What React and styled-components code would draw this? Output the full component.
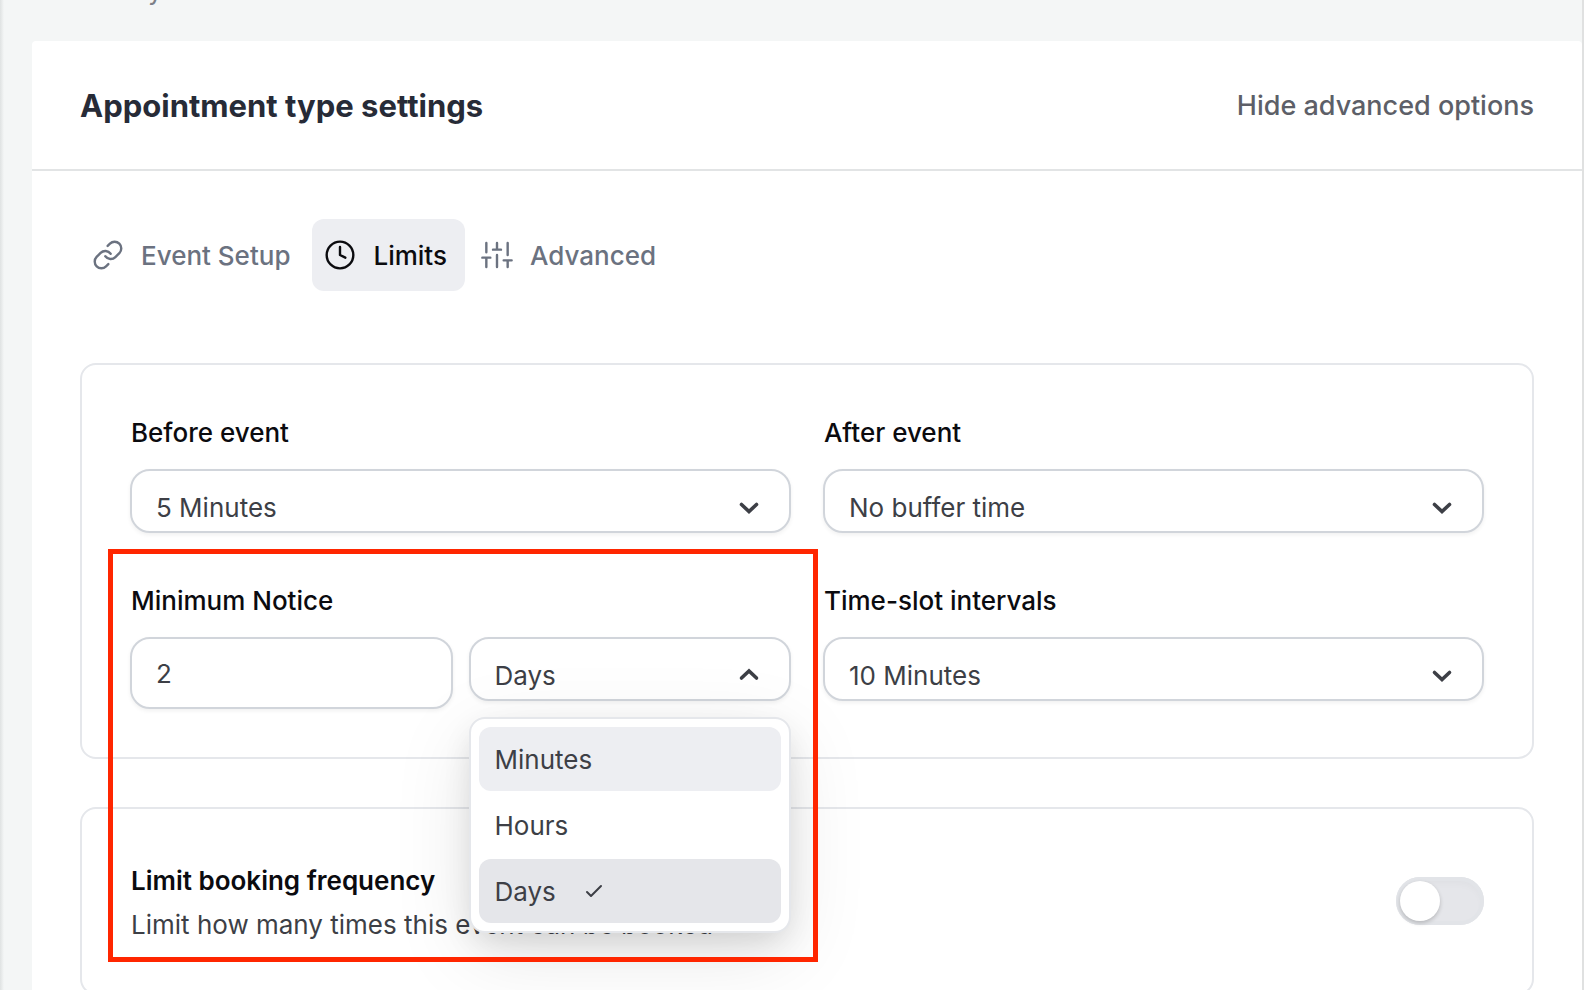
import { useState } from "react";
import styled, { createGlobalStyle, css } from "styled-components";

const GlobalStyle = createGlobalStyle`
  * {
    box-sizing: border-box;
  }

  body {
    margin: 0;
    overflow: hidden;
    background: #f4f6f6;
  }

  body, button, input, select {
    font-family: Inter, "Liberation Sans", sans-serif;
    font-size: 26px;
    color: #3d3f46;
  }
`;

const Page = styled.div`
  min-height: 100vh;
  padding-left: 32px;
  border-right: 2px solid #e0e1e1;
  background: linear-gradient(90deg, #dfe2e2, #f4f6f6 4px);
`;

const TopStrip = styled.div`
  height: 41px;
  padding-left: 116px;
  overflow: hidden;
`;

const Subtitle = styled.p`
  margin: -25px 0 0;
  font-size: 26px;
  line-height: 32px;
  color: #7d8087;
`;

const Panel = styled.main`
  background: #fff;
  border-radius: 4px 4px 0 0;
`;

const Header = styled.header`
  display: flex;
  justify-content: space-between;
  align-items: center;
  height: 130px;
  padding: 0 48px;
  border-bottom: 2px solid #e2e4e5;
`;

const Title = styled.h1`
  margin: 0;
  font-size: 31px;
  font-weight: 700;
  color: #272b37;
`;

const TextButton = styled.button`
  padding: 0;
  border: none;
  background: none;
  font-size: 27px;
  font-weight: 500;
  color: #5d5f68;
  cursor: pointer;
`;

const Body = styled.div`
  padding: 48px;
`;

const Tabs = styled.nav`
  display: flex;
  gap: 4px;
  margin-bottom: 72px;
`;

const Tab = styled.button`
  display: flex;
  align-items: center;
  gap: 17px;
  height: 72px;
  padding: 0 18px 0 12px;
  border: none;
  border-radius: 12px;
  background: ${(p) => (p.$active ? "#edeef2" : "transparent")};
  color: ${(p) => (p.$active ? "#0b0b0f" : "#6b7280")};
  font-weight: 500;
  cursor: pointer;

  svg {
    width: 32px;
    height: 32px;
    fill: none;
    stroke: currentColor;
    stroke-width: 1.8;
    stroke-linecap: round;
    stroke-linejoin: round;
  }
`;

const Card = styled.section`
  padding: 48px;
  border: 2px solid #e5e7eb;
  border-radius: 16px;

  & + & {
    margin-top: 48px;
  }
`;

const FieldGrid = styled.div`
  display: grid;
  grid-template-columns: 1fr 1fr;
  gap: 48px 32px;
`;

const Field = styled.div`
  position: relative;
`;

const Label = styled.label`
  display: block;
  margin-bottom: 16px;
  padding-left: 1px;
  line-height: 40px;
  font-weight: 500;
  color: #0b0b0f;
`;

const Pair = styled.div`
  display: grid;
  grid-template-columns: 1fr 1fr;
  align-items: start;
  gap: 16px;
`;

const control = css`
  width: 100%;
  border: 2px solid #d1d5db;
  border-radius: 20px;
  background: #fff;
  box-shadow: 0 2px 4px rgba(0, 0, 0, 0.06);
  outline: none;
`;

const TextInput = styled.input`
  ${control}
  height: 72px;
  padding: 0 24px;
`;

const SelectWrap = styled.div`
  position: relative;
  display: grid;
  align-items: center;

  > select,
  > svg {
    grid-area: 1 / 1;
  }

  > svg {
    justify-self: end;
    width: 24px;
    height: 16px;
    margin: 14px 30px 0 0;
    fill: none;
    stroke: #3d3f46;
    stroke-width: 3.6;
    stroke-linecap: round;
    pointer-events: none;
  }
`;

const NativeSelect = styled.select`
  ${control}
  height: 64px;
  padding: 12px 64px 0 24px;
  appearance: none;
`;

const Menu = styled.ul`
  position: absolute;
  z-index: 1;
  top: 80px;
  left: 0;
  right: 0;
  display: flex;
  flex-direction: column;
  gap: 2px;
  margin: 0;
  padding: 8px;
  list-style: none;
  background: #fff;
  border: 2px solid #e5e7eb;
  border-radius: 16px;
  box-shadow: 0 20px 80px rgba(0, 0, 0, 0.1), 0 12px 32px -6px rgba(0, 0, 0, 0.14);
`;

const MenuItem = styled.button`
  display: flex;
  align-items: center;
  gap: 28px;
  width: 100%;
  height: 64px;
  padding: 0 16px;
  border: none;
  border-radius: 12px;
  background: ${(p) => (p.$selected ? "#e5e6ea" : p.$focused ? "#edeef2" : "#fff")};
  cursor: pointer;

  svg {
    width: 20px;
    height: 16px;
    fill: none;
    stroke: currentColor;
    stroke-width: 2;
    stroke-linecap: round;
    stroke-linejoin: round;
  }
`;

// red frame drawn round the minimum notice setting
const Highlight = styled.div`
  position: absolute;
  z-index: 2;
  top: -32px;
  left: -22px;
  right: -27px;
  height: 413px;
  border: 5px solid #ff2600;
  pointer-events: none;
`;

const ToggleRow = styled.div`
  display: flex;
  justify-content: space-between;
  align-items: center;
`;

const ToggleTitle = styled.label`
  display: block;
  padding-left: 1px;
  line-height: 48px;
  font-weight: 600;
  color: #0b0b0f;
`;

const Description = styled.p`
  margin: 0;
  padding-left: 1px;
  line-height: 40px;
`;

const Toggle = styled.input`
  flex: none;
  width: 88px;
  height: 48px;
  margin: 0;
  padding: 4px;
  appearance: none;
  border-radius: 24px;
  background: #e5e6ea;
  box-shadow: inset 0 0 0 4px #e2e4e8, inset 0 6px 8px rgba(0, 0, 0, 0.03);
  cursor: pointer;

  &::before {
    content: "";
    display: block;
    width: 40px;
    height: 40px;
    border-radius: 50%;
    background: #fff;
    box-shadow: 0 2px 4px rgba(0, 0, 0, 0.2);
  }

  &:checked::before {
    margin-left: auto;
  }
`;

const LinkIcon = () => (
  <svg viewBox="0 0 24 24">
    <path d="M10 13a5 5 0 0 0 7.54.54l3-3a5 5 0 0 0-7.07-7.07l-1.72 1.71" />
    <path d="M14 11a5 5 0 0 0-7.54-.54l-3 3a5 5 0 0 0 7.07 7.07l1.71-1.71" />
  </svg>
);

const ClockIcon = () => (
  <svg viewBox="0 0 24 24">
    <circle cx="12" cy="12" r="10" />
    <path d="M12 6v6l4 2" />
  </svg>
);

const SlidersIcon = () => (
  <svg viewBox="0 0 24 24">
    <path d="M4 21v-7M4 10V3M12 21v-9M12 8V3M20 21v-5M20 12V3M1 14h6M9 8h6M17 16h6" />
  </svg>
);

function Select({ id, label, options, value, open, onChange }) {
  return (
    <SelectWrap>
      <NativeSelect id={id} aria-label={label} value={value} onChange={(e) => onChange(e.target.value)}>
        {options.map((o) => (
          <option key={o}>{o}</option>
        ))}
      </NativeSelect>
      <svg viewBox="0 0 24 16">
        <path d={open ? "M4.5 10 12 3 19.5 10" : "M4.5 4.5 12 11.5 19.5 4.5"} />
      </svg>
      {open && (
        <Menu>
          {options.map((o, i) => (
            <li key={o}>
              <MenuItem $selected={o === value} $focused={i === 0} onClick={() => onChange(o)}>
                {o}
                {o === value && (
                  <svg viewBox="0 0 20 16">
                    <path d="M3 9 7 13 17 3" />
                  </svg>
                )}
              </MenuItem>
            </li>
          ))}
        </Menu>
      )}
    </SelectWrap>
  );
}

const tabs = [
  { name: "Event Setup", Icon: LinkIcon },
  { name: "Limits", Icon: ClockIcon },
  { name: "Advanced", Icon: SlidersIcon },
];

const buffers = ["No buffer time", "5 Minutes", "10 Minutes", "15 Minutes"];
const units = ["Minutes", "Hours", "Days"];

function App() {
  const [tab, setTab] = useState("Limits");
  const [before, setBefore] = useState("5 Minutes");
  const [after, setAfter] = useState("No buffer time");
  const [notice, setNotice] = useState("2");
  const [unit, setUnit] = useState("Days");
  const [slot, setSlot] = useState("10 Minutes");

  return (
    <Page>
      <GlobalStyle />
      <TopStrip>
        <Subtitle>y</Subtitle>
      </TopStrip>
      <Panel>
        <Header>
          <Title>Appointment type settings</Title>
          <TextButton>Hide advanced options</TextButton>
        </Header>
        <Body>
          <Tabs>
            {tabs.map(({ name, Icon }) => (
              <Tab key={name} $active={name === tab} onClick={() => setTab(name)}>
                <Icon />
                {name}
              </Tab>
            ))}
          </Tabs>

          <Card>
            <FieldGrid>
              <Field>
                <Label htmlFor="before">Before event</Label>
                <Select id="before" options={buffers} value={before} onChange={setBefore} />
              </Field>
              <Field>
                <Label htmlFor="after">After event</Label>
                <Select id="after" options={buffers} value={after} onChange={setAfter} />
              </Field>
              <Field>
                <Label htmlFor="notice">Minimum Notice</Label>
                <Pair>
                  <TextInput id="notice" value={notice} onChange={(e) => setNotice(e.target.value)} />
                  <Select id="unit" label="Notice unit" options={units} value={unit} onChange={setUnit} open />
                </Pair>
                <Highlight />
              </Field>
              <Field>
                <Label htmlFor="slot">Time-slot intervals</Label>
                <Select id="slot" options={buffers.slice(1)} value={slot} onChange={setSlot} />
              </Field>
            </FieldGrid>
          </Card>

          <Card>
            <ToggleRow>
              <div>
                <ToggleTitle htmlFor="frequency">Limit booking frequency</ToggleTitle>
                <Description>Limit how many times this event can be booked</Description>
              </div>
              <Toggle type="checkbox" id="frequency" />
            </ToggleRow>
          </Card>
        </Body>
      </Panel>
    </Page>
  );
}

export default App;
